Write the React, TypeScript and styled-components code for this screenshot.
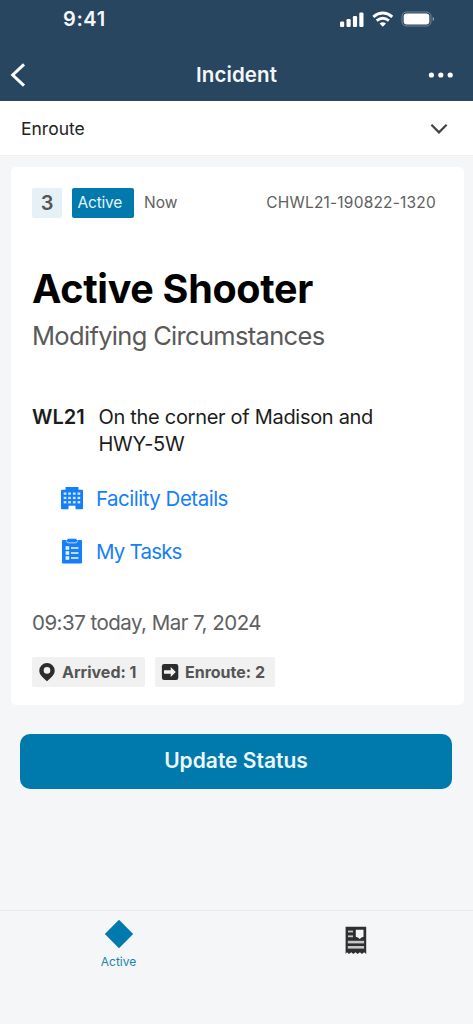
import React from 'react';
import styled, { createGlobalStyle } from 'styled-components';

const GlobalStyle = createGlobalStyle`
  * { box-sizing: border-box; }
  body { margin: 0; background: #f4f6f8; font-family: Inter, "Liberation Sans", sans-serif; }
`;

const Screen = styled.div`
  width: 473px;
  height: 1024px;
  display: flex;
  flex-direction: column;
  background: #f4f6f8;
  overflow: hidden;
`;

const Header = styled.header`
  height: 101px;
  flex: none;
  background: #28465f;
  color: #f4f7f9;
`;

const StatusBar = styled.div`
  height: 38px;
  padding: 0 38px 0 63px;
  display: flex;
  align-items: center;
  justify-content: space-between;
`;

const Clock = styled.span`
  font-size: 20px;
  font-weight: 600;
  letter-spacing: 0.6px;
  line-height: 24px;
`;

const StatusIcons = styled.svg`
  display: block;
`;

const NavBar = styled.div`
  height: 63px;
  padding: 11px 19px 0 10px;
  display: grid;
  grid-template-columns: 60px 1fr 51px;
  align-items: center;
`;

const NavTitle = styled.h1`
  margin: 0;
  text-align: center;
  font-size: 20.5px;
  font-weight: 600;
  line-height: 24px;
  letter-spacing: 0.1px;
`;

const MoreIcon = styled.svg`
  justify-self: end;
`;

const StatusSelect = styled.div`
  height: 55px;
  flex: none;
  padding: 2px 25px 0 21px;
  display: flex;
  align-items: center;
  justify-content: space-between;
  background: #fff;
  border-bottom: 1px solid #efefef;
  color: #222;
  font-size: 17.5px;
  line-height: 24px;
`;

const Card = styled.section`
  margin: 11px 9px 0 11px;
  height: 538px;
  flex: none;
  padding: 20px 28px 0 21px;
  border-radius: 5px;
  background: #fff;
`;

const MetaRow = styled.div`
  display: flex;
  align-items: center;
  height: 31px;
  font-size: 15.5px;
  color: #606060;
`;

const Priority = styled.span`
  width: 30px;
  height: 30px;
  margin-right: 10px;
  border-radius: 2px;
  background: #e6f1f7;
  color: #555;
  font-size: 20px;
  font-weight: 600;
  line-height: 30px;
  text-align: center;
`;

const StateTag = styled.span`
  width: 62px;
  height: 30px;
  margin-right: 10px;
  padding-left: 5.5px;
  border-radius: 2px;
  background: #007aad;
  color: #e5f4fb;
  line-height: 30px;
  letter-spacing: -0.2px;
`;

const IncidentCode = styled.span`
  margin-left: auto;
  letter-spacing: 0.2px;
`;

const Title = styled.h2`
  margin: 46px 0 0;
  font-size: 39.5px;
  line-height: 50px;
  font-weight: 700;
  letter-spacing: -0.32px;
  color: #000;
  white-space: nowrap;
`;

const Subtitle = styled.p`
  margin: 5px 0 0;
  font-size: 25.5px;
  line-height: 34px;
  letter-spacing: -0.68px;
  color: #5a5a5a;
`;

const Location = styled.div`
  margin-top: 51px;
  display: grid;
  grid-template-columns: 66.5px 290px;
  font-size: 20px;
  line-height: 26.5px;
  color: #1c1c1c;
`;

const Unit = styled.strong`
  font-weight: 600;
`;

const Address = styled.span`
  letter-spacing: -0.3px;
`;

const Links = styled.nav`
  margin: 27px 0 0 28px;
  display: grid;
  gap: 23px;
`;

const LinkRow = styled.a<{ $spacing: number }>`
  height: 30px;
  display: grid;
  grid-template-columns: 36px auto;
  align-items: center;
  color: #157efb;
  font-size: 20.5px;
  line-height: 30px;
  letter-spacing: ${(p) => p.$spacing}px;

  svg {
    margin-bottom: 2px;
  }
`;

const Timestamp = styled.p`
  margin: 42px 0 0;
  font-size: 20.5px;
  line-height: 28px;
  letter-spacing: -0.52px;
  color: #606060;
`;

const ChipRow = styled.div`
  margin-top: 20px;
  display: flex;
  gap: 10px;
`;

const Chip = styled.span<{ $width: number }>`
  width: ${(p) => p.$width}px;
  height: 30px;
  padding-left: 6px;
  display: flex;
  align-items: center;
  gap: 6px;
  border-radius: 2px;
  background: #f1f1f1;
  color: #555;
  font-size: 16px;
  font-weight: 700;
  white-space: nowrap;
`;

const UpdateButton = styled.button`
  height: 55px;
  flex: none;
  margin: 29px 21px 0 20px;
  padding: 0 0 2px;
  border: 0;
  border-radius: 10px;
  background: #007aad;
  color: #edf7fb;
  font-family: inherit;
  font-size: 21px;
  font-weight: 600;
`;

const TabBar = styled.footer`
  height: 114px;
  flex: none;
  margin-top: auto;
  border-top: 1px solid #e9ebec;
  display: grid;
  grid-template-columns: 1fr 1fr;
`;

const Tab = styled.div<{ $top: number; $left: number }>`
  padding: ${(p) => p.$top}px 0 0 ${(p) => p.$left}px;
  display: flex;
  flex-direction: column;
  align-items: center;
  gap: 5px;
  color: #1d83ad;
  font-size: 12px;
  line-height: 15px;
`;

const StatusGlyphs = () => (
  <StatusIcons width="96" height="18" viewBox="0 0 96 18" fill="#fff">
    <rect x="1" y="11.5" width="4.2" height="5.5" rx="1.2" />
    <rect x="7.5" y="9" width="4.2" height="8" rx="1.2" />
    <rect x="13.9" y="6" width="4.2" height="11" rx="1.2" />
    <rect x="20.3" y="2.5" width="4.2" height="14.5" rx="1.2" />
    <g fill="none" stroke="#fff" strokeWidth="2.9">
      <path d="M34.300 6.800q9.500-7.500 19 0" />
      <path d="M37.700 10.700q6.100-4.800 12.200 0" />
    </g>
    <path d="M40.600 13.400q3.200-2.300 6.400 0l-3.200 3.400z" />
    <rect x="63" y="2" width="29" height="14" rx="4.400" fill="none" stroke="#fff" strokeOpacity=".35" />
    <rect x="64.700" y="3.600" width="25.600" height="10.800" rx="3" />
    <path d="M93.600 6.700q1.600.800 1.600 2.300t-1.600 2.300z" opacity=".45" />
  </StatusIcons>
);

const BuildingIcon = () => (
  <svg width="24" height="24" viewBox="0 0 24 24">
    <path fill="#157efb" d="M5.500.900h13v2.800H22q1 0 1 1v17.500q0 1-1 1h-6.500v-3.500h-7v3.500H2q-1 0-1-1V4.700q0-1 1-1h3.500z" />
    <g fill="#d4e8ff">
      {[6.5, 10.8, 15.1].map((y) =>
        [3.7, 8.2, 12.9, 17.500].map((x) => <rect key={`${x}-${y}`} x={x} y={y} width="2.700" height="2.300" />),
      )}
    </g>
  </svg>
);

const TasksIcon = () => (
  <svg width="24" height="26" viewBox="0 0 24 26">
    <path fill="#157efb" d="M3 2h4.500V.800h9V2H21a1 1 0 0 1 1 1v21.500a1 1 0 0 1-1 1H3a1 1 0 0 1-1-1V3a1 1 0 0 1 1-1z" />
    <path fill="none" stroke="#b7d9ff" strokeWidth="1" d="M6.400 2.500q.2 2.300 1.800 2.300h7.600q1.600 0 1.800-2.300" />
    <g fill="#e6f2ff">
      {[8.2, 13.2, 18.2].map((y) => (
        <React.Fragment key={y}>
          <rect x="5.600" y={y} width="3.600" height="3.600" />
          <rect x="11" y={y + 1} width="7.500" height="1.600" />
        </React.Fragment>
      ))}
    </g>
  </svg>
);

const PinIcon = () => (
  <svg width="18" height="20" viewBox="0 0 18 20">
    <path fill="#2c2c2c" fillRule="evenodd" d="M9 1a7.700 7.700 0 0 0-7.700 7.700C1.300 13 5.200 15.500 9 19.200c3.800-3.700 7.700-6.200 7.700-10.500A7.700 7.700 0 0 0 9 1zm0 4.100a3.300 3.300 0 1 1 0 6.600 3.300 3.300 0 0 1 0-6.600z" />
  </svg>
);

const ArrowBoxIcon = () => (
  <svg width="18" height="18" viewBox="0 0 18 18">
    <rect x="0.900" y="1" width="16.400" height="16" rx="2.200" fill="#2c2c2c" />
    <path fill="#f1f1f1" d="M3 7.200h6.700V4l5.100 5-5.100 5v-3.200H3z" />
  </svg>
);

const DocumentIcon = () => (
  <svg width="22" height="29" viewBox="0 0 22 29">
    <path fill="#2f2f2f" d="M.600.700h20.600v27.300l-2-1.800-2.300 1.800-2-1.800-2.300 1.800-2-1.800L8.300 28l-2-1.800L4 28l-2-1.800L.600 28z" />
    <g fill="#c4c6c7">
      <rect x="3" y="4.600" width="5" height="1.800" />
      <rect x="3" y="9.400" width="5" height="1.800" />
      <rect x="2.800" y="14.800" width="16.300" height="2.600" />
      <rect x="2.800" y="20" width="16.300" height="2.600" />
    </g>
    <path fill="#f4f6f8" d="M10.800 3.700h7.700v7l-2 .800-1.800 1.500-1.800-1.500-2.100-.800z" />
  </svg>
);

export default function App() {
  return (
    <Screen>
      <GlobalStyle />
      <Header>
        <StatusBar>
          <Clock>9:41</Clock>
          <StatusGlyphs />
        </StatusBar>
        <NavBar>
          <svg width="16" height="26" viewBox="0 0 16 26" fill="none" stroke="#fff" strokeWidth="3">
            <path d="M14 2.400 2.700 13 14 23.600" />
          </svg>
          <NavTitle>Incident</NavTitle>
          <MoreIcon width="26" height="8" viewBox="0 0 26 8" fill="#fff">
            <circle cx="3.400" cy="4" r="2.600" />
            <circle cx="12.800" cy="4" r="2.600" />
            <circle cx="22.200" cy="4" r="2.600" />
          </MoreIcon>
        </NavBar>
      </Header>
      <StatusSelect>
        Enroute
        <svg width="18" height="12" viewBox="0 0 18 12" fill="none" stroke="#444" strokeWidth="2.200">
          <path d="m1.400 1.800 7.600 7.600 7.600-7.600" />
        </svg>
      </StatusSelect>
      <Card>
        <MetaRow>
          <Priority>3</Priority>
          <StateTag>Active</StateTag>
          <span>Now</span>
          <IncidentCode>CHWL21-190822-1320</IncidentCode>
        </MetaRow>
        <Title>Active Shooter</Title>
        <Subtitle>Modifying Circumstances</Subtitle>
        <Location>
          <Unit>WL21</Unit>
          <Address>On the corner of Madison and HWY-5W</Address>
        </Location>
        <Links>
          <LinkRow $spacing={-0.5}>
            <BuildingIcon />
            Facility Details
          </LinkRow>
          <LinkRow $spacing={-0.8}>
            <TasksIcon />
            My Tasks
          </LinkRow>
        </Links>
        <Timestamp>09:37 today, Mar 7, 2024</Timestamp>
        <ChipRow>
          <Chip $width={113}>
            <PinIcon />
            Arrived: 1
          </Chip>
          <Chip $width={120}>
            <ArrowBoxIcon />
            Enroute: 2
          </Chip>
        </ChipRow>
      </Card>
      <UpdateButton>Update Status</UpdateButton>
      <TabBar>
        <Tab $top={8} $left={0.5}>
          <svg width="30" height="30" viewBox="0 0 30 30">
            <path fill="#007aad" d="m15 .800 14.200 14.200L15 29.200.800 15z" />
          </svg>
          Active
        </Tab>
        <Tab $top={15} $left={3}>
          <DocumentIcon />
        </Tab>
      </TabBar>
    </Screen>
  );
}
